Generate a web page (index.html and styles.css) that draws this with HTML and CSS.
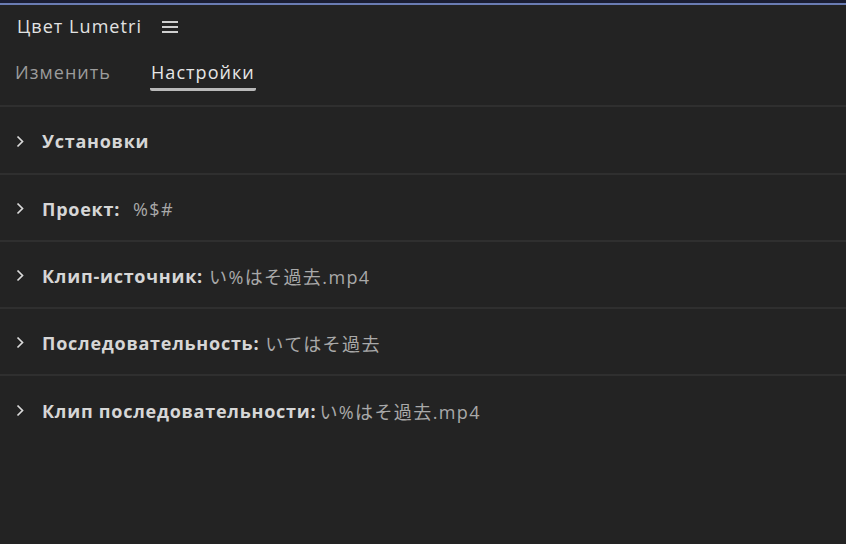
FILE: index.html
```html
<!DOCTYPE html>
<html lang="ru">
<head>
<meta charset="utf-8">
<link rel="stylesheet" href="styles.css">
</head>
<body>
<div class="topbar"></div>
<div class="panel">
  <div class="header">
    <span class="title">Цвет Lumetri</span>
    <svg class="menu" width="16" height="12" viewBox="0 0 16 12"><rect x="0" y="0" width="16" height="2" fill="#cfcfcf"/><rect x="0" y="5" width="16" height="2" fill="#cfcfcf"/><rect x="0" y="10" width="16" height="2" fill="#cfcfcf"/></svg>
  </div>
  <div class="tabs">
    <span class="tab">Изменить</span>
    <span class="tab active">Настройки</span>
  </div>
  <div class="sections">
    <div class="row first"><svg class="chev" width="9" height="13" viewBox="0 0 9 13"><path d="M1.5 1.5 L6.5 6.5 L1.5 11.5" fill="none" stroke="#dadada" stroke-width="1.7"/></svg><span class="label">Установки</span></div>
    <div class="row"><svg class="chev" width="9" height="13" viewBox="0 0 9 13"><path d="M1.5 1.5 L6.5 6.5 L1.5 11.5" fill="none" stroke="#dadada" stroke-width="1.7"/></svg><span class="label">Проект:</span><span class="value gap">%$#</span></div>
    <div class="row"><svg class="chev" width="9" height="13" viewBox="0 0 9 13"><path d="M1.5 1.5 L6.5 6.5 L1.5 11.5" fill="none" stroke="#dadada" stroke-width="1.7"/></svg><span class="label">Клип-источник:</span><span class="value">い%はそ過去.mp4</span></div>
    <div class="row"><svg class="chev" width="9" height="13" viewBox="0 0 9 13"><path d="M1.5 1.5 L6.5 6.5 L1.5 11.5" fill="none" stroke="#dadada" stroke-width="1.7"/></svg><span class="label">Последовательность:</span><span class="value">いてはそ過去</span></div>
    <div class="row last"><svg class="chev" width="9" height="13" viewBox="0 0 9 13"><path d="M1.5 1.5 L6.5 6.5 L1.5 11.5" fill="none" stroke="#dadada" stroke-width="1.7"/></svg><span class="label">Клип последовательности:</span><span class="value tight">い%はそ過去.mp4</span></div>
  </div>
</div>
</body>
</html>
```

FILE: styles.css
```css
html, body {
  margin: 0;
  padding: 0;
  background: #232323;
  width: 846px;
  height: 544px;
  overflow: hidden;
  font-family: "Open Sans", "Noto Sans CJK JP", sans-serif;
}
.topbar {
  height: 3px;
  background: #1b1e33;
  border-bottom: 2px solid #6a7cb3;
}
.panel {
  display: flex;
  flex-direction: column;
}
.header {
  display: flex;
  align-items: center;
  height: 42px;
  padding-left: 17px;
}
.title {
  color: #e2e2e2;
  font-size: 18px;
  letter-spacing: 1.05px;
}
.menu {
  margin-left: 20px;
  margin-top: 1px;
}
.tabs {
  display: flex;
  gap: 39px;
  padding-left: 15px;
  height: 58px;
  border-bottom: 2px solid #2f2f2f;
}
.tab {
  color: #9c9c9c;
  font-size: 18px;
  letter-spacing: 1.05px;
  padding-top: 13px;
  height: 28px;
  box-sizing: content-box;
}
.tab.active {
  color: #e6e6e6;
  border-bottom: 3px solid #b9b9b9;
  border-radius: 2px;
  padding-left: 1px;
  padding-right: 1px;
}
.sections {
  display: flex;
  flex-direction: column;
}
.row {
  display: flex;
  align-items: center;
  padding-top: 2px;
  box-sizing: border-box;
  height: 67px;
  border-bottom: 2px solid #2f2f2f;
  padding-left: 16px;
  font-size: 18px;
}
.row.first {
  height: 68px;
}
.row.last {
  border-bottom: none;
}
.chev {
  margin-right: 17px;
}
.label {
  color: #d6d6d6;
  font-weight: 700;
  letter-spacing: 0.75px;
}
.value {
  color: #a9a9a9;
  margin-left: 6px;
  letter-spacing: 1.4px;
}
.value.gap {
  margin-left: 13px;
}
.value.tight {
  margin-left: 3px;
}
```
